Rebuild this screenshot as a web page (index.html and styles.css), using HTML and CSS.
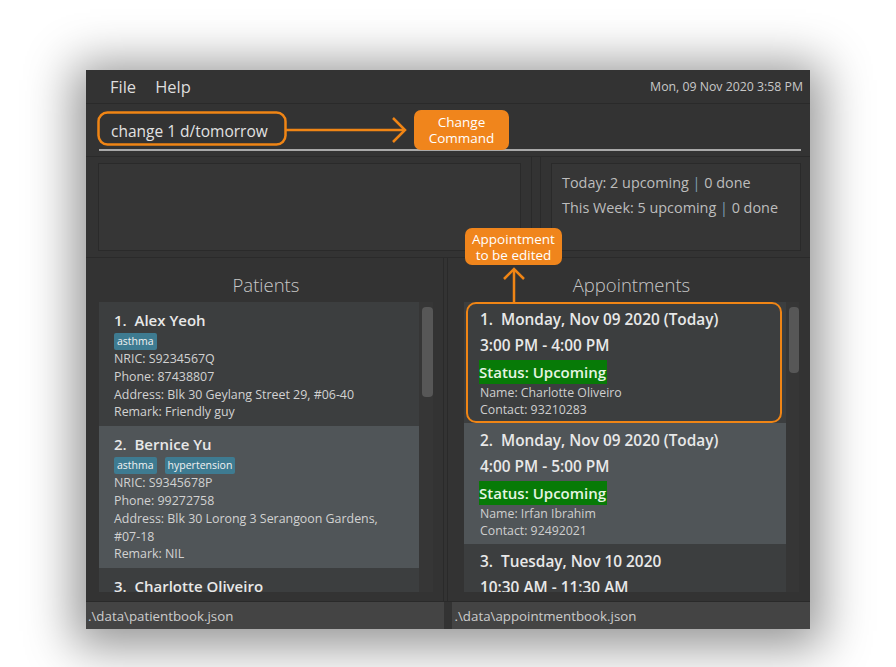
FILE: index.html
```html
<!DOCTYPE html>
<html>
<head>
<meta charset="utf-8">
<link rel="stylesheet" href="styles.css">
</head>
<body>
<div class="window">
  <div class="menubar">
    <span class="menu">File</span>
    <span class="menu">Help</span>
    <span class="clock">Mon, 09 Nov 2020 3:58 PM</span>
  </div>
  <div class="command">
    <div class="cmd-input"><span class="cmd-text">change 1 d/tomorrow</span></div>
  </div>
  <div class="results">
    <div class="pane pane-left"><div class="result-box"></div></div>
    <div class="pane pane-right">
      <div class="result-box stats">
        <p>Today: 2 upcoming <span class="sep">|</span> 0 done</p>
        <p>This Week: 5 upcoming <span class="sep">|</span> 0 done</p>
      </div>
    </div>
  </div>
  <div class="lists">
    <section class="panel patients">
      <h2 class="panel-title">Patients</h2>
      <div class="list">
        <div class="cells">
          <div class="cell even">
            <div class="big">1.&nbsp;&nbsp;Alex Yeoh</div>
            <div class="tags"><span class="tag">asthma</span></div>
            <div class="small">NRIC: S9234567Q</div>
            <div class="small">Phone: 87438807</div>
            <div class="small">Address: Blk 30 Geylang Street 29, #06-40</div>
            <div class="small">Remark: Friendly guy</div>
          </div>
          <div class="cell odd">
            <div class="big">2.&nbsp;&nbsp;Bernice Yu</div>
            <div class="tags"><span class="tag">asthma</span><span class="tag">hypertension</span></div>
            <div class="small">NRIC: S9345678P</div>
            <div class="small">Phone: 99272758</div>
            <div class="small">Address: Blk 30 Lorong 3 Serangoon Gardens,<br>#07-18</div>
            <div class="small">Remark: NIL</div>
          </div>
          <div class="cell even">
            <div class="big">3.&nbsp;&nbsp;Charlotte Oliveiro</div>
          </div>
        </div>
        <div class="scroll"><div class="thumb thumb-left"></div></div>
      </div>
    </section>
    <section class="panel appointments">
      <h2 class="panel-title">Appointments</h2>
      <div class="list">
        <div class="cells">
          <div class="cell appt even">
            <div class="big">1.&nbsp;&nbsp;Monday, Nov 09 2020 (Today)</div>
            <div class="big time">3:00 PM - 4:00 PM</div>
            <div class="status"><span class="badge">Status: Upcoming</span></div>
            <div class="tiny">Name: Charlotte Oliveiro</div>
            <div class="tiny">Contact: 93210283</div>
            <div class="outline"></div>
          </div>
          <div class="cell appt odd">
            <div class="big">2.&nbsp;&nbsp;Monday, Nov 09 2020 (Today)</div>
            <div class="big time">4:00 PM - 5:00 PM</div>
            <div class="status"><span class="badge">Status: Upcoming</span></div>
            <div class="tiny">Name: Irfan Ibrahim</div>
            <div class="tiny">Contact: 92492021</div>
          </div>
          <div class="cell appt even">
            <div class="big">3.&nbsp;&nbsp;Tuesday, Nov 10 2020</div>
            <div class="big time">10:30 AM - 11:30 AM</div>
          </div>
        </div>
        <div class="scroll"><div class="thumb thumb-right"></div></div>
      </div>
    </section>
  </div>
  <div class="statusbar">
    <div class="status-item">.\data\patientbook.json</div>
    <div class="status-item">.\data\appointmentbook.json</div>
  </div>

  <svg class="overlay" width="724" height="559" viewBox="0 0 724 559">
    <rect x="12.5" y="42.5" width="187" height="32" rx="9" fill="none" stroke="#f08515" stroke-width="2.5"/>
    <line x1="200" y1="60" x2="319" y2="60" stroke="#f08515" stroke-width="2.5"/>
    <polyline points="307,48 319,60 307,72" fill="none" stroke="#f08515" stroke-width="2.5"/>
    <line x1="428" y1="232" x2="428" y2="200" stroke="#f08515" stroke-width="2.5"/>
    <polyline points="418,209 428,199 438,209" fill="none" stroke="#f08515" stroke-width="2.5"/>
  </svg>
  <div class="note note-change">Change<br>Command</div>
  <div class="note note-appt">Appointment<br>to be edited</div>
</div>
</body>
</html>
```

FILE: styles.css
```css
* { box-sizing: border-box; }
html, body { margin: 0; padding: 0; }
body {
  width: 896px;
  height: 667px;
  background: #ffffff;
  font-family: "Open Sans", "Noto Sans", sans-serif;
  overflow: hidden;
}
.window {
  position: relative;
  margin: 70px 0 0 86px;
  width: 724px;
  height: 559px;
  background: #333333;
  display: flex;
  flex-direction: column;
  box-shadow: 0 6px 45px 12px rgba(0, 0, 0, 0.42);
}
.menubar {
  height: 34px;
  display: flex;
  align-items: center;
  padding: 0 7px 0 24px;
  border-bottom: 1px solid #2a2a2a;
  background: #333333;
}
.menu {
  font-size: 16.5px;
  color: #dddddd;
  margin-right: 19px;
}
.clock {
  margin-left: auto;
  font-size: 12.3px;
  color: #c8c8c8;
}
.command {
  height: 53px;
  padding: 6px 9px 0 13px;
  border-bottom: 1px solid #2a2a2a;
}
.cmd-input {
  height: 41px;
  border-bottom: 2px solid #a9a9a9;
  display: flex;
  align-items: center;
  padding: 0 0 0 12px;
}
.cmd-text {
  font-size: 15.5px;
  color: #e2e2e2;
  margin-top: 2px;
}
.results {
  height: 101px;
  display: flex;
  gap: 8px;
  border-bottom: 1px solid #2a2a2a;
}
.pane {
  border-right: 1px solid #2a2a2a;
  border-left: 1px solid #2a2a2a;
  padding: 6px 10px 6px 12px;
}
.pane-left { width: 446px; border-left: none; }
.pane-right { flex: 1; padding: 6px 9px 6px 10px; border-right: none; }
.result-box {
  height: 100%;
  border: 1px solid #2a2a2a;
  background: #363636;
}
.stats { padding: 6px 0 0 10px; }
.stats p {
  margin: 0;
  font-size: 14.4px;
  line-height: 25px;
  color: #bdbdbd;
}
.sep { color: #7f9fb4; }
.lists {
  height: 343px;
  display: flex;
  gap: 3px;
}
.panel {
  display: flex;
  flex-direction: column;
  border-right: 1px solid #2a2a2a;
  border-left: 1px solid #2a2a2a;
  padding-bottom: 9px;
}
.patients { width: 358px; padding-left: 13px; padding-right: 10px; border-left: none; }
.appointments { flex: 1; padding-left: 16px; padding-right: 11px; border-right: none; }
.panel-title {
  margin: 0;
  height: 44px;
  padding-top: 13px;
  text-align: center;
  font-size: 18.5px;
  font-weight: 300;
  color: #c8c8c8;
  line-height: 28px;
}
.list {
  flex: 1;
  display: flex;
  gap: 3px;
  overflow: hidden;
  background: #363636;
}
.cells {
  flex: 1;
  overflow: hidden;
}
.scroll {
  width: 11px;
  padding-top: 5px;
}
.appointments .scroll { width: 10px; }
.thumb {
  width: 100%;
  background: #575757;
  border-radius: 4px;
}
.thumb-left { height: 90px; }
.thumb-right { height: 66px; }
.cell {
  position: relative;
  padding: 7px 10px 5px 15px;
}
.even { background: #3c3e3f; }
.odd { background: #505558; }
.big {
  font-size: 15px;
  font-weight: 600;
  line-height: 22px;
  color: #e8e8e8;
  white-space: nowrap;
}
.tags {
  display: flex;
  gap: 8px;
  margin-top: 2px;
  height: 17px;
}
.tag {
  background: #3e7b91;
  color: #f2f2f2;
  font-size: 10.5px;
  line-height: 17px;
  padding: 0 3px;
  border-radius: 2px;
}
.small {
  font-size: 12.4px;
  line-height: 17.8px;
  color: #d2d2d2;
}
.appt { padding: 7px 10px 5px 16px; }
.appt .big { font-size: 15.4px; }
.appt .time { margin-top: 4px; }
.status { margin-top: 3px; height: 24px; }
.badge {
  display: inline-block;
  background: #077a07;
  color: #e6f5e3;
  font-size: 15px;
  font-weight: 600;
  line-height: 24px;
  padding: 0 1px 0 0;
  margin-left: -1px;
}
.tiny {
  font-size: 12.3px;
  line-height: 17px;
  color: #cfcfcf;
}
.outline {
  position: absolute;
  top: 0;
  bottom: 0;
  left: 2px;
  right: 4px;
  border: 2.5px solid #f08515;
  border-radius: 10px;
}
.statusbar {
  height: 28px;
  display: flex;
  gap: 8px;
  border-top: 1px solid #2a2a2a;
}
.status-item {
  flex: 1;
  background: #444444;
  color: #cccccc;
  font-size: 13.3px;
  line-height: 27px;
  padding: 1px 0 0 2px;
}
.status-item + .status-item { padding-left: 3px; }
.overlay {
  position: absolute;
  left: 0;
  top: 0;
  pointer-events: none;
}
.note {
  position: absolute;
  background: #f0851c;
  color: #ffffff;
  font-size: 13.5px;
  line-height: 16px;
  text-align: center;
  border-radius: 7px;
  display: flex;
  align-items: center;
  justify-content: center;
}
.note-change { left: 328px; top: 40px; width: 95px; height: 40px; }
.note-appt { left: 379px; top: 158px; width: 97px; height: 37px; }
```
